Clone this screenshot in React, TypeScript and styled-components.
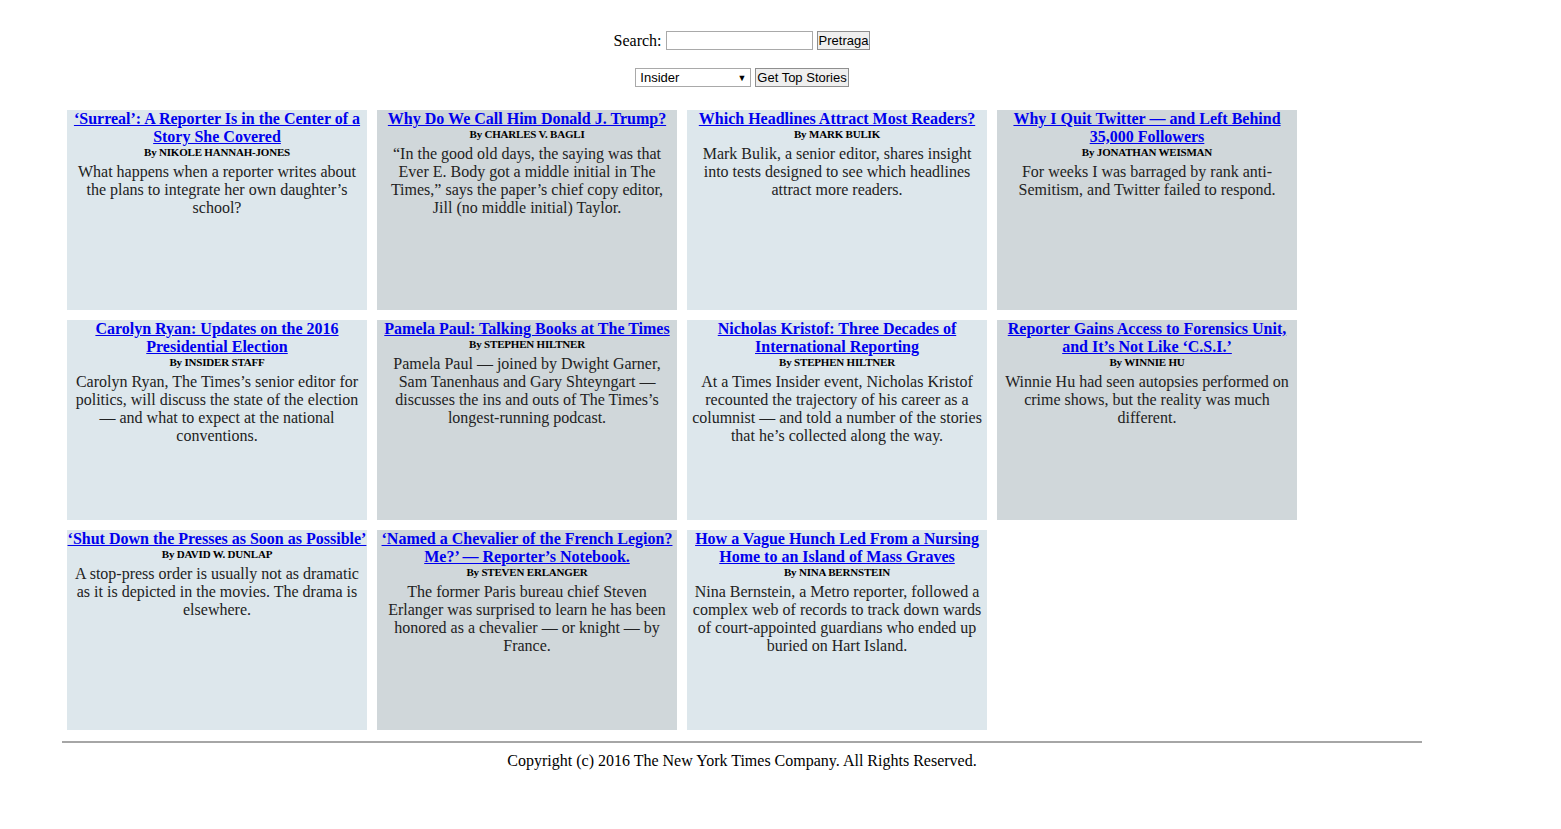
import React from 'react';
import styled, { createGlobalStyle } from 'styled-components';

const GlobalStyle = createGlobalStyle`
    body {
        margin: 0;
        background: #ffffff;
        font-family: "Liberation Serif", "Times New Roman", serif;
        color: #000;
    }
`;

const Page = styled.div`
    width: 1360px;
    margin-left: 62px;
`;

const SearchRow = styled.div`
    display: flex;
    justify-content: center;
    align-items: center;
    gap: 4px;
    margin-top: 30px;
    height: 21px;
    font-size: 16px;
`;

const SelectRow = styled.div`
    display: flex;
    justify-content: center;
    align-items: center;
    gap: 4px;
    margin-top: 16px;
    height: 21px;
`;

const TextBox = styled.input`
    box-sizing: border-box;
    width: 147px;
    height: 19px;
    border: 1px solid #a9a9a9;
    padding: 1px 2px;
    font-family: "Liberation Sans", Arial, sans-serif;
    font-size: 13px;
`;

const Button = styled.button`
    box-sizing: border-box;
    height: 19px;
    padding: 0 1px;
    border: 1px solid #8f8f8f;
    border-radius: 0;
    background: #efefef;
    font-family: "Liberation Sans", Arial, sans-serif;
    font-size: 13px;
    color: #000;
    line-height: 17px;
`;

const SelectBox = styled.div`
    box-sizing: border-box;
    width: 116px;
    height: 19px;
    border: 1px solid #a9a9a9;
    display: flex;
    align-items: center;
    justify-content: space-between;
    padding: 0 4px 0 4px;
    font-family: "Liberation Sans", Arial, sans-serif;
    font-size: 13px;
    background: #fff;
`;

const Arrow = styled.span`
    font-size: 9px;
`;

const Grid = styled.div`
    display: flex;
    flex-wrap: wrap;
    margin-top: 17px;
`;

const Card = styled.div<{ $alt: boolean }>`
    box-sizing: border-box;
    width: 300px;
    height: 200px;
    margin: 5px;
    background: ${p => (p.$alt ? '#d0d7da' : '#dde7ec')};
    text-align: center;
    overflow: hidden;
`;

const Title = styled.a`
    display: block;
    font-size: 16px;
    font-weight: bold;
    line-height: 18px;
    color: #0000ee;
    text-decoration: underline;
`;

const Byline = styled.div`
    font-size: 11px;
    font-weight: bold;
    line-height: 13px;
    letter-spacing: -0.2px;
`;

const Abstract = styled.p`
    margin: 4px 0 0 0;
    padding: 0 5px;
    font-size: 16px;
    line-height: 18px;
    color: #222;
`;

const Rule = styled.hr`
    margin: 6px 0 0 0;
    border: none;
    border-top: 2px solid #a6a6a6;
`;

const Footer = styled.div`
    text-align: center;
    font-size: 16px;
    margin-top: 9px;
`;

const stories = [
    {
        title: '‘Surreal’: A Reporter Is in the Center of a Story She Covered',
        by: 'By NIKOLE HANNAH-JONES',
        text: 'What happens when a reporter writes about the plans to integrate her own daughter’s school?',
    },
    {
        title: 'Why Do We Call Him Donald J. Trump?',
        by: 'By CHARLES V. BAGLI',
        text: '“In the good old days, the saying was that Ever E. Body got a middle initial in The Times,” says the paper’s chief copy editor, Jill (no middle initial) Taylor.',
    },
    {
        title: 'Which Headlines Attract Most Readers?',
        by: 'By MARK BULIK',
        text: 'Mark Bulik, a senior editor, shares insight into tests designed to see which headlines attract more readers.',
    },
    {
        title: 'Why I Quit Twitter — and Left Behind 35,000 Followers',
        by: 'By JONATHAN WEISMAN',
        text: 'For weeks I was barraged by rank anti-Semitism, and Twitter failed to respond.',
    },
    {
        title: 'Carolyn Ryan: Updates on the 2016 Presidential Election',
        by: 'By INSIDER STAFF',
        text: 'Carolyn Ryan, The Times’s senior editor for politics, will discuss the state of the election — and what to expect at the national conventions.',
    },
    {
        title: 'Pamela Paul: Talking Books at The Times',
        by: 'By STEPHEN HILTNER',
        text: 'Pamela Paul — joined by Dwight Garner, Sam Tanenhaus and Gary Shteyngart — discusses the ins and outs of The Times’s longest-running podcast.',
    },
    {
        title: 'Nicholas Kristof: Three Decades of International Reporting',
        by: 'By STEPHEN HILTNER',
        text: 'At a Times Insider event, Nicholas Kristof recounted the trajectory of his career as a columnist — and told a number of the stories that he’s collected along the way.',
    },
    {
        title: 'Reporter Gains Access to Forensics Unit, and It’s Not Like ‘C.S.I.’',
        by: 'By WINNIE HU',
        text: 'Winnie Hu had seen autopsies performed on crime shows, but the reality was much different.',
    },
    {
        title: '‘Shut Down the Presses as Soon as Possible’',
        by: 'By DAVID W. DUNLAP',
        text: 'A stop-press order is usually not as dramatic as it is depicted in the movies. The drama is elsewhere.',
    },
    {
        title: '‘Named a Chevalier of the French Legion? Me?’ — Reporter’s Notebook.',
        by: 'By STEVEN ERLANGER',
        text: 'The former Paris bureau chief Steven Erlanger was surprised to learn he has been honored as a chevalier — or knight — by France.',
    },
    {
        title: 'How a Vague Hunch Led From a Nursing Home to an Island of Mass Graves',
        by: 'By NINA BERNSTEIN',
        text: 'Nina Bernstein, a Metro reporter, followed a complex web of records to track down wards of court-appointed guardians who ended up buried on Hart Island.',
    },
];

function App() {
    return (
        <>
            <GlobalStyle />
            <Page>
                <SearchRow>
                    Search: <TextBox type="text" />
                    <Button>Pretraga</Button>
                </SearchRow>
                <SelectRow>
                    <SelectBox>
                        Insider <Arrow>▼</Arrow>
                    </SelectBox>
                    <Button>Get Top Stories</Button>
                </SelectRow>
                <Grid>
                    {stories.map((story, i) => (
                        <Card key={i} $alt={i % 2 === 1}>
                            <Title href="#">{story.title}</Title>
                            <Byline>{story.by}</Byline>
                            <Abstract>{story.text}</Abstract>
                        </Card>
                    ))}
                </Grid>
                <Rule />
                <Footer>Copyright (c) 2016 The New York Times Company. All Rights Reserved.</Footer>
            </Page>
        </>
    );
}

export default App;
